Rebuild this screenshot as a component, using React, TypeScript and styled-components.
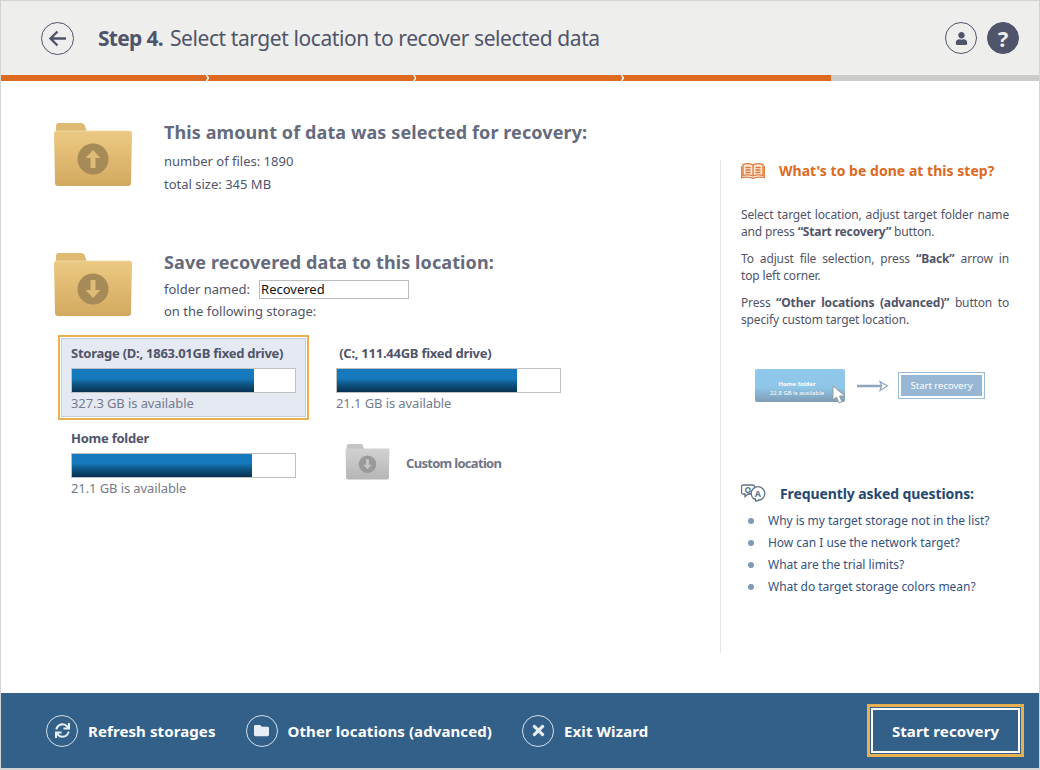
import React from 'react';
import styled, { createGlobalStyle } from 'styled-components';
import { FaSync, FaTimes, FaFolder, FaUser } from 'react-icons/fa';

const GlobalStyle = createGlobalStyle`
  body {
    margin: 0;
    background: #fff;
    font-family: "Noto Sans", "Open Sans", sans-serif;
  }
`;

const Window = styled.div`
  display: flex;
  flex-direction: column;
  box-sizing: border-box;
  width: 1040px;
  height: 770px;
  border: 1px solid #d4d4d4;
  border-bottom-width: 2px;
  background: #fff;
  overflow: hidden;
`;

const Header = styled.header`
  display: flex;
  align-items: center;
  flex: none;
  height: 74px;
  padding: 0 20px 0 40px;
  background: #eeeeed;
`;

const BackButton = styled.div`
  display: flex;
  align-items: center;
  justify-content: center;
  box-sizing: border-box;
  width: 33px;
  height: 33px;
  border: 1px solid #50546a;
  border-radius: 50%;
`;

const HeaderTitle = styled.h1`
  flex: 1;
  margin: 0 0 0 24px;
  font-size: 21px;
  font-weight: 400;
  color: #50546a;
  letter-spacing: -0.42px;
  b {
    margin-right: 7px;
    font-weight: 700;
    letter-spacing: -0.7px;
  }
`;

const HeaderIcons = styled.div`
  display: flex;
  gap: 10px;
`;

const RoundIcon = styled.div<{ $filled?: boolean }>`
  display: flex;
  align-items: center;
  justify-content: center;
  box-sizing: border-box;
  width: 32px;
  height: 32px;
  border: 1px solid #50546a;
  border-radius: 50%;
  background: ${(p) => (p.$filled ? '#50546a' : 'transparent')};
  color: ${(p) => (p.$filled ? '#eeeeed' : '#50546a')};
  font-size: 22px;
  font-weight: 700;
`;

const Progress = styled.div`
  display: flex;
  flex: none;
  height: 6px;
  background: #cbcbc9;
`;

const Segment = styled.div`
  position: relative;
  width: 207.5px;
  background: #de6a22;
  &:not(:last-child)::after {
    content: '';
    position: absolute;
    top: 0;
    right: -1px;
    width: 4px;
    height: 6px;
    background: #fff;
    clip-path: polygon(0 0, 40% 0, 100% 50%, 40% 100%, 0 100%, 50% 50%);
  }
`;

const Main = styled.main`
  display: flex;
  flex: 1;
  min-height: 0;
`;

const LeftColumn = styled.div`
  flex: none;
  box-sizing: border-box;
  width: 719px;
  padding: 40px 0 0 52px;
`;

const Section = styled.section<{ $height: number }>`
  display: flex;
  height: ${(p) => p.$height}px;
`;

const FolderSlot = styled.div`
  flex: none;
  width: 111px;
  padding-top: 2px;
`;

const SectionText = styled.div`
  display: flex;
  flex-direction: column;
`;

const SectionTitle = styled.h2`
  margin: 0 0 5px;
  font-size: 18px;
  line-height: 23px;
  font-weight: 700;
  color: #656b7e;
  letter-spacing: 0.1px;
`;

const InfoLine = styled.div`
  display: flex;
  align-items: center;
  height: 23px;
  font-size: 13px;
  color: #50546a;
`;

const SaveLine = styled(InfoLine)`
  height: 22px;
`;

const FolderInput = styled.input`
  box-sizing: border-box;
  width: 150px;
  height: 19px;
  margin-left: 9px;
  padding: 0 1px;
  border: 1px solid #bcbcbc;
  outline: none;
  font: 13px "Noto Sans", sans-serif;
  color: #111;
`;

const SaveLines = styled.div`
  display: flex;
  flex-direction: column;
  margin-top: -1px;
`;

const StorageGrid = styled.div`
  display: grid;
  grid-template-columns: 251px 250px;
  grid-auto-rows: 85px;
  column-gap: 14px;
  margin: 0 0 0 5px;
`;

const StorageCard = styled.div<{ $selected?: boolean }>`
  box-sizing: border-box;
  height: 85px;
  padding: ${(p) => (p.$selected ? '1px' : '3px')};
  border: ${(p) => (p.$selected ? '2px solid #e9b04f' : 'none')};
  background: ${(p) => (p.$selected ? '#fff' : 'transparent')};
`;

const CardInner = styled.div<{ $selected?: boolean }>`
  box-sizing: border-box;
  height: 79px;
  padding: 5px 9px 0;
  border: 1px solid ${(p) => (p.$selected ? '#c3cede' : 'transparent')};
  background: ${(p) => (p.$selected ? '#e5e9f1' : 'transparent')};
`;

const CardName = styled.div`
  height: 19px;
  font-size: 13px;
  line-height: 19px;
  font-weight: 700;
  color: #50546a;
  letter-spacing: -0.25px;
  white-space: nowrap;
`;

const Bar = styled.div`
  box-sizing: border-box;
  width: 225px;
  height: 25px;
  margin-top: 5px;
  border: 1px solid #c0c0c0;
  background: #fff;
`;

const BarFill = styled.div`
  height: 100%;
  background: linear-gradient(#1679bd 0%, #157abd 40%, #0f5b8c 62%, #07304f 100%);
`;

const Available = styled.div`
  margin-top: 1px;
  font-size: 13px;
  line-height: 18px;
  color: #757b8c;
  letter-spacing: -0.1px;
`;

const CustomLocation = styled.div`
  display: flex;
  align-items: center;
  gap: 16px;
  height: 85px;
  padding-left: 22px;
  font-size: 13px;
  font-weight: 700;
  color: #6f7587;
  letter-spacing: -0.7px;
`;

const Sidebar = styled.aside`
  box-sizing: border-box;
  width: 290px;
  height: 493px;
  margin-top: 79px;
  padding: 0 1px 0 20px;
  border-left: 1px solid #e4e4e4;
`;

const SideHeading = styled.div<{ $faq?: boolean }>`
  display: flex;
  align-items: center;
  gap: 14px;
  height: 20px;
  font-size: 14px;
  font-weight: 700;
  color: ${(p) => (p.$faq ? '#24476f' : '#dc6a22')};
  letter-spacing: ${(p) => (p.$faq ? '-0.1px' : '0.03px')};
`;

const HelpText = styled.p`
  margin: 0 0 10px;
  font-size: 12px;
  line-height: 17px;
  text-align: justify;
  color: #50546a;
  letter-spacing: -0.15px;
  b {
    font-weight: 700;
  }
`;

const HelpBlock = styled.div`
  margin-top: 26px;
`;

const Illustration = styled.div`
  display: flex;
  align-items: center;
  height: 33px;
  margin: 41px 0 0 14px;
`;

const DemoCard = styled.div`
  position: relative;
  display: flex;
  flex-direction: column;
  align-items: center;
  justify-content: flex-end;
  box-sizing: border-box;
  width: 90px;
  height: 33px;
  padding-bottom: 4px;
  padding-right: 6px;
  border-radius: 2px;
  background: linear-gradient(#8fc8ec 0%, #8fc6e8 55%, #7e9db5 100%);
  color: #fff;
  font-size: 6px;
  line-height: 9px;
  white-space: nowrap;
  b {
    font-weight: 700;
  }
  svg {
    position: absolute;
    right: -2px;
    bottom: -3px;
  }
`;

const DemoArrow = styled.div`
  width: 32px;
  margin: 0 9px 0 12px;
  line-height: 0;
`;

const DemoButton = styled.div`
  box-sizing: border-box;
  width: 87px;
  height: 27px;
  padding: 2px;
  border: 1px solid #97bad8;
`;

const DemoButtonInner = styled.div`
  display: flex;
  align-items: center;
  justify-content: center;
  height: 100%;
  background: #97b7d4;
  color: #fff;
  font-size: 9.5px;
`;

const FaqBlock = styled.div`
  margin-top: 81px;
`;

const FaqList = styled.ul`
  margin: 7px 0 0;
  padding: 0;
  list-style: none;
`;

const FaqItem = styled.li`
  position: relative;
  height: 22px;
  padding-left: 27px;
  font-size: 12px;
  line-height: 22px;
  color: #34527e;
  letter-spacing: -0.03px;
  white-space: nowrap;
  &::before {
    content: '';
    position: absolute;
    left: 7px;
    top: 8px;
    width: 6px;
    height: 6px;
    border-radius: 50%;
    background: #7e9ab6;
  }
`;

const Footer = styled.footer`
  display: flex;
  align-items: center;
  flex: none;
  height: 75px;
  padding: 0 15px 0 45px;
  background: #336089;
`;

const FooterAction = styled.div`
  display: flex;
  align-items: center;
  gap: 10px;
  margin-right: 30px;
  color: #fff;
  font-size: 15px;
  font-weight: 700;
  letter-spacing: 0.1px;
`;

const FooterIcon = styled.div`
  display: flex;
  align-items: center;
  justify-content: center;
  box-sizing: border-box;
  width: 32px;
  height: 32px;
  border: 1px solid #d5dfe9;
  border-radius: 50%;
  font-size: 15px;
  color: #e6edf4;
`;

const StartButton = styled.div`
  box-sizing: border-box;
  width: 157px;
  height: 53px;
  margin-left: auto;
  padding: 1px;
  border: 3px solid #e9b04f;
`;

const StartInner = styled.div`
  display: flex;
  align-items: center;
  justify-content: center;
  box-sizing: border-box;
  height: 100%;
  border: 2px solid #fff;
  color: #fff;
  font-size: 15px;
  font-weight: 700;
  letter-spacing: 0.1px;
`;

function Folder({
  width,
  direction,
  gray,
}: {
  width: number;
  direction: 'up' | 'down';
  gray?: boolean;
}) {
  const id = `${direction}${gray ? 'g' : 'y'}`;
  const top = gray ? '#d2d2d2' : '#ecc983';
  const bottom = gray ? '#b5b5b5' : '#d3a95f';
  const tab = gray ? '#c4c4c4' : '#dfba72';
  const badge = gray ? '#9a9a9a' : '#a68a57';
  const arrow = gray ? '#c6c6c6' : '#dfbb78';
  return (
    <svg width={width} height={(width * 66) / 80} viewBox="0 0 80 66">
      <defs>
        <linearGradient id={id} x1="0" y1="0" x2="0" y2="1">
          <stop offset="0" stopColor={top} />
          <stop offset="1" stopColor={bottom} />
        </linearGradient>
      </defs>
      <path d="M3 10V3q0-3 3-3h22q3 0 4 3l2 6h42v8H3z" fill={tab} />
      <path
        d="M1 10q0-2 2-2h74q2 0 2 2l-1 50q0 3-3 3H5q-3 0-3-3z"
        fill={`url(#${id})`}
      />
      <path d="M1.500 10q0-2 2-2h73q2 0 2 2" fill="none" stroke="#f3dca8" strokeOpacity={gray ? 0 : 0.8} />
      <circle cx="40" cy="36" r="15.500" fill={badge} />
      <path
        d={
          direction === 'up'
            ? 'M40 27l7.500 8h-5v10h-5V35h-5z'
            : 'M40 45l7.500-8h-5V27h-5v10h-5z'
        }
        fill={arrow}
      />
    </svg>
  );
}

function BookIcon() {
  return (
    <svg width="24" height="17" viewBox="0 0 24 17" fill="none" stroke="#de7a3a" strokeWidth="1.300">
      <path d="M2 2.500q5-2 10 .5q5-2.500 10-.5v11q-5-1.500-10 .5q-5-2-10-.5z" fill="#fbe6d6" />
      <path d="M12 3v11M4.500 5.500h5M4.500 8h5M4.500 10.500h5M14.500 5.500h5M14.500 8h5M14.500 10.500h5" />
      <path d="M.7 4v11.500q6-1.200 11.300.8q5.300-2 11.300-.8V4" />
    </svg>
  );
}

function QaIcon() {
  return (
    <svg width="25" height="18" viewBox="0 0 25 18">
      <path
        d="M2.500 1h9q2 0 2 2v5q0 2-2 2H7l-3 2.500V10H2.500q-2 0-2-2V3q0-2 2-2z"
        fill="#fff"
        stroke="#5f7286"
        strokeWidth="1.300"
      />
      <circle cx="17" cy="9.500" r="6.800" fill="#fff" stroke="#5f7286" strokeWidth="1.300" />
      <path d="M14 14l1 3.500 3-2" fill="#fff" stroke="#5f7286" strokeWidth="1.200" />
      <text x="3.500" y="8.500" fontSize="8.500" fontWeight="700" fill="#5f7286" fontFamily="Noto Sans">Q</text>
      <text x="13.700" y="13" fontSize="9" fontWeight="700" fill="#5f7286" fontFamily="Noto Sans">A</text>
    </svg>
  );
}

const drives = [
  { name: 'Storage (D:, 1863.01GB fixed drive)', used: 81.5, free: '327.3 GB is available', selected: true },
  { name: '\u00a0(C:, 111.44GB fixed drive)', used: 80.7, free: '21.1 GB is available' },
  { name: 'Home folder', used: 80.7, free: '21.1 GB is available' },
];

const faqs = [
  'Why is my target storage not in the list?',
  'How can I use the network target?',
  'What are the trial limits?',
  'What do target storage colors mean?',
];

export default function App() {
  return (
    <Window>
      <GlobalStyle />
      <Header>
        <BackButton>
          <svg width="19" height="17" viewBox="0 0 19 17" fill="none" stroke="#50546a" strokeWidth="2.400">
            <path d="M18 8.500H3M9.500 1.500l-7 7 7 7" />
          </svg>
        </BackButton>
        <HeaderTitle>
          <b>Step 4.</b>Select target location to recover selected data
        </HeaderTitle>
        <HeaderIcons>
          <RoundIcon>
            <FaUser size={13} />
          </RoundIcon>
          <RoundIcon $filled>?</RoundIcon>
        </HeaderIcons>
      </Header>
      <Progress>
        <Segment />
        <Segment />
        <Segment />
        <Segment />
      </Progress>
      <Main>
        <LeftColumn>
          <Section $height={130}>
            <FolderSlot>
              <Folder width={80} direction="up" />
            </FolderSlot>
            <SectionText>
              <SectionTitle>This amount of data was selected for recovery:</SectionTitle>
              <InfoLine>number of files: 1890</InfoLine>
              <InfoLine>total size: 345 MB</InfoLine>
            </SectionText>
          </Section>
          <Section $height={84}>
            <FolderSlot>
              <Folder width={80} direction="down" />
            </FolderSlot>
            <SectionText>
              <SectionTitle>Save recovered data to this location:</SectionTitle>
              <SaveLines>
                <SaveLine>
                  folder named:
                  <FolderInput defaultValue="Recovered" />
                </SaveLine>
                <SaveLine>on the following storage:</SaveLine>
              </SaveLines>
            </SectionText>
          </Section>
          <StorageGrid>
            {drives.map((d) => (
              <StorageCard key={d.name} $selected={d.selected}>
                <CardInner $selected={d.selected}>
                  <CardName>{d.name}</CardName>
                  <Bar>
                    <BarFill style={{ width: `${d.used}%` }} />
                  </Bar>
                  <Available>{d.free}</Available>
                </CardInner>
              </StorageCard>
            ))}
            <CustomLocation>
              <Folder width={45} direction="down" gray />
              Custom location
            </CustomLocation>
          </StorageGrid>
        </LeftColumn>
        <Sidebar>
          <SideHeading>
            <BookIcon />
            What's to be done at this step?
          </SideHeading>
          <HelpBlock>
            <HelpText>
              Select target location, adjust target folder name and press <b>“Start recovery”</b> button.
            </HelpText>
            <HelpText>
              To adjust file selection, press <b>“Back”</b> arrow in top{'\u00a0'}left corner.
            </HelpText>
            <HelpText>
              Press <b>“Other locations (advanced)”</b> button to specify custom target location.
            </HelpText>
          </HelpBlock>
          <Illustration>
            <DemoCard>
              <b>Home folder</b>
              22.8 GB is available
              <svg width="15" height="20" viewBox="0 0 15 20">
                <path d="M1 1v14l3.500-3 2.500 6 3-1.300-2.500-5.700H13z" fill="#fff" stroke="#9a9a9a" />
              </svg>
            </DemoCard>
            <DemoArrow>
              <svg width="32" height="12" viewBox="0 0 32 12" fill="none">
                <path d="M0 6h24" stroke="#8fa6bf" strokeWidth="2.500" />
                <path d="M23 1.500L30.500 6 23 10.500l1.500-4.500z" fill="#fff" stroke="#8fa6bf" strokeWidth="1.200" />
              </svg>
            </DemoArrow>
            <DemoButton>
              <DemoButtonInner>Start recovery</DemoButtonInner>
            </DemoButton>
          </Illustration>
          <FaqBlock>
            <SideHeading $faq>
              <QaIcon />
              Frequently asked questions:
            </SideHeading>
            <FaqList>
              {faqs.map((q) => (
                <FaqItem key={q}>{q}</FaqItem>
              ))}
            </FaqList>
          </FaqBlock>
        </Sidebar>
      </Main>
      <Footer>
        <FooterAction>
          <FooterIcon>
            <FaSync />
          </FooterIcon>
          Refresh storages
        </FooterAction>
        <FooterAction>
          <FooterIcon>
            <FaFolder />
          </FooterIcon>
          Other locations (advanced)
        </FooterAction>
        <FooterAction>
          <FooterIcon>
            <FaTimes size={17} />
          </FooterIcon>
          Exit Wizard
        </FooterAction>
        <StartButton>
          <StartInner>Start recovery</StartInner>
        </StartButton>
      </Footer>
    </Window>
  );
}
